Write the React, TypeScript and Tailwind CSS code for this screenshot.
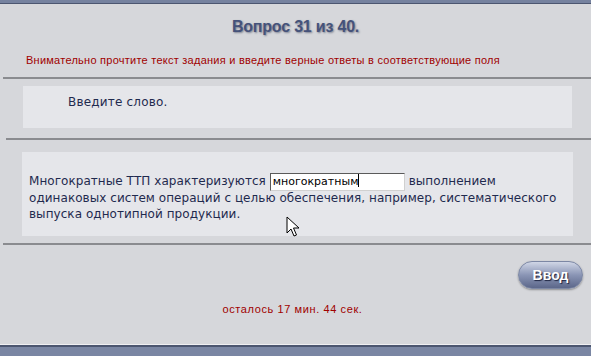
import React from "react";

function Cursor() {
  return (
    <svg width="14" height="22" viewBox="0 0 14 22" className="absolute left-[286px] top-[216px]">
      <path d="M1 1 L1 17 L5 13 L8 20 L10.5 19 L7.5 12 L13 12 Z" fill="#fff" stroke="#000" strokeWidth="1" strokeLinejoin="round" />
    </svg>
  );
}

export default function App() {
  return (
    <div
      className="relative w-[591px] h-[356px] flex flex-col bg-[#d6d7db] overflow-hidden"
      style={{ fontFamily: '"Liberation Sans", Arial, sans-serif' }}
    >
      {/* top band */}
      <div className="h-[3px] bg-[#76829f]" />
      <div className="h-[1px] bg-[#4c5670]" />

      <div className="flex-1 flex flex-col">
        <div className="h-[35px] flex items-end justify-center">
          <span
            className="text-[16px] font-bold text-[#45527a] tracking-[-0.2px]"
            style={{ textShadow: "1px 1px 2px #7d8090" }}
          >
            Вопрос 31 из 40.
          </span>
        </div>
        <div className="pl-[26px] pt-[15px] text-[11px] text-[#a00000] tracking-[0.25px] leading-[13px]">
          Внимательно прочтите текст задания и введите верные ответы в соответствующие поля
        </div>

        <div className="mt-[10px] ml-[3px] h-[2px] bg-[#8a8b8f]" />

        <div className="mt-[7px] ml-[23px] mr-[19px] h-[42px] bg-[#e5e6ea] pl-[45px] pt-[3px]">
          <span
            className="text-[12px] text-[#1f2a4e] tracking-[0.2px]"
            style={{ fontFamily: '"DejaVu Sans", Verdana, sans-serif' }}
          >
            Введите слово.
          </span>
        </div>

        <div className="mt-[10px] ml-[6px] h-[2px] bg-[#8a8b8f]" />

        <div
          className="mt-[12px] ml-[22px] mr-[18px] h-[84px] bg-[#e5e6ea] pl-[7px] pr-[6px] pt-[21px] text-[12px] leading-[16px] text-[#1f2a4e] tracking-[0.05px]"
          style={{ fontFamily: '"DejaVu Sans", Verdana, sans-serif' }}
        >
          Многократные ТТП характеризуются{" "}
          <span className="inline-block align-middle w-[135px] h-[18px] -my-[1px] bg-white border border-t-[#5a5a5a] border-l-[#5a5a5a] border-r-[#d0d0d0] border-b-[#d0d0d0] text-[11px] leading-[15px] pl-[2px] text-black tracking-normal">
            многократным<span className="inline-block w-[1px] h-[13px] bg-black align-middle -mt-[2px]" />
          </span>{" "}
          выполнением одинаковых систем операций с целью обеспечения, например, систематического выпуска однотипной продукции.
        </div>

        <div className="mt-[7px] ml-[3px] h-[2px] bg-[#8a8b8f]" />

        <div className="flex justify-end pr-[8px] mt-[16px]">
          <div
            className="w-[65px] h-[28px] rounded-full flex items-center justify-center text-white font-bold text-[14px] border border-[#7c87a4] bg-gradient-to-b from-[#d0d6e6] via-[#8a95b5] to-[#5c678a] shadow-[0_1px_2px_rgba(0,0,0,0.35)]"
            style={{ textShadow: "1px 1px 1px #1d2440" }}
          >
            Ввод
          </div>
        </div>

        <div className="mt-[12px] text-center text-[11px] text-[#a00000] tracking-[0.6px] pr-[6px]">
          осталось 17 мин. 44 сек.
        </div>
      </div>

      {/* bottom band */}
      <div className="h-[1px] bg-[#f0f0f2]" />
      <div className="h-[2px] bg-[#4c5670]" />
      <div className="h-[9px] bg-[#7a86a3]" />

      <Cursor />
    </div>
  );
}
